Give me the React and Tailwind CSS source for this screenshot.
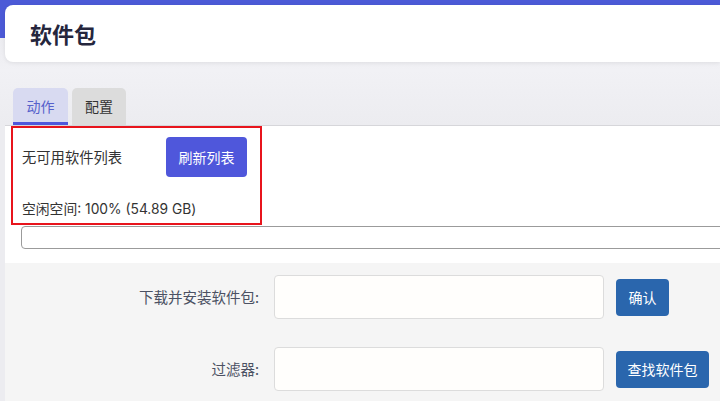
import React from 'react';

const FONT = { fontFamily: '"Noto Sans CJK SC", "Noto Sans", sans-serif' };
const LATIN = { fontFamily: 'Inter, "Noto Sans CJK SC", sans-serif' };

function FormRow({ label, button, buttonWidth, className = '' }) {
  return (
    <div className={`flex items-center ${className}`}>
      <label className="w-[255px] shrink-0 pr-[1px] text-right text-[14.5px] text-[#4b5163]">{label}</label>
      <input
        type="text"
        className="ml-[14px] h-[44px] w-[330px] shrink-0 rounded-[4px] border border-[#dcdcdc] bg-[#fffefc] px-3 text-sm outline-none"
      />
      <button
        type="button"
        className={`ml-[12px] h-[37px] ${buttonWidth} shrink-0 rounded-[4px] bg-[#2a66ad] text-[14px] text-white`}
      >
        {button}
      </button>
    </div>
  );
}

export default function App() {
  return (
    <div
      className="h-[401px] w-[720px] overflow-hidden bg-[linear-gradient(to_bottom,#4c5ad7_0px,#4c5ad7_38px,#ececf0_38px,#f1f1f5_70px,#ececf0_124px)]"
      style={FONT}
    >
      {/* Page header */}
      <div className="ml-[5px] mt-[5px] flex h-[57px] items-center rounded-l-[8px] bg-white pl-[25px] shadow-[0_1px_4px_rgba(0,0,0,0.08)]">
        <h1 className="text-[22px] font-bold text-[#25263d]">软件包</h1>
      </div>

      {/* Tabs */}
      <div className="mt-[26px] flex gap-[4px] pl-[13px]">
        <div className="flex h-[37px] w-[55px] items-center justify-center rounded-t-[5px] border-b-[3px] border-[#4f58dc] bg-[#d8daf1] pt-[2px] text-[14px] text-[#5661cb]">
          动作
        </div>
        <div className="flex h-[37px] w-[54px] items-center justify-center rounded-t-[5px] bg-[#dcdcdc] pb-[1px] text-[14px] text-[#333]">
          配置
        </div>
      </div>

      {/* Panel */}
      <div className="ml-[5px] border-t border-[#d6d6da] bg-white">
        <div className="ml-[6px] h-[99px] w-[251px] border-2 border-[#e8141c] pl-[9px] pt-[9px]">
          <div className="flex items-center">
            <span className="w-[144px] text-[14.3px] text-[#333]">无可用软件列表</span>
            <button
              type="button"
              className="h-[40px] w-[81px] rounded-[4px] bg-[#4f57db] text-[14px] text-white"
            >
              刷新列表
            </button>
          </div>
          <div className="mt-[22px] text-[13.8px] leading-[20px] text-[#333]" style={LATIN}>
            空闲空间: 100% (54.89 GB)
          </div>
        </div>
        <div className="ml-[16px] mt-[1px] h-[23px] w-[720px] rounded-[4px] border border-[#9b9b9b]" />

        {/* Form */}
        <div className="mt-[14px] bg-[#f5f5f5] pb-[12px] pt-[12px]">
          <FormRow label="下载并安装软件包:" button="确认" buttonWidth="w-[53px]" />
          <FormRow label="过滤器:" button="查找软件包" buttonWidth="w-[93px]" className="mt-[28px]" />
        </div>
      </div>
    </div>
  );
}
